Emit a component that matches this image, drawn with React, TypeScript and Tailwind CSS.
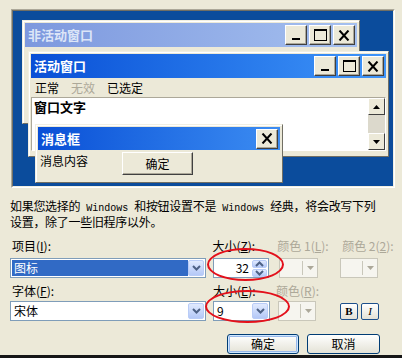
import type { ReactNode } from "react";

type CaptionKind = "min" | "max" | "close";

function CaptionButton({ kind }: { kind: CaptionKind }) {
  return (
    <div className="flex h-[20px] w-[22px] items-center justify-center border border-t-white border-l-white border-r-[#404040] border-b-[#404040] bg-[#ECE9D8] shadow-[inset_-1px_-1px_0_#ACA899]">
      {kind === "min" && (
        <svg width="12" height="12">
          <rect x="2" y="9" width="8" height="2" fill="#000" />
        </svg>
      )}
      {kind === "max" && (
        <svg width="13" height="12">
          <rect x="0.5" y="0.5" width="12" height="11" fill="none" stroke="#000" />
          <rect x="0" y="0" width="13" height="2" fill="#000" />
        </svg>
      )}
      {kind === "close" && (
        <svg width="12" height="11">
          <path d="M1.5 0.5 L10.5 10.5 M10.5 0.5 L1.5 10.5" stroke="#000" strokeWidth="2" />
        </svg>
      )}
    </div>
  );
}

function Chevron({ up = false, color = "#4D6185" }: { up?: boolean; color?: string }) {
  return (
    <svg width="9" height="6">
      <path
        d={up ? "M1 5 L4.5 1.5 L8 5" : "M1 1 L4.5 4.5 L8 1"}
        fill="none"
        stroke={color}
        strokeWidth="2"
      />
    </svg>
  );
}

function DropButton() {
  return (
    <div className="flex w-[16px] items-center justify-center rounded-[2px] border border-[#B9CCF7] bg-gradient-to-b from-[#E1EAFE] to-[#B4C8F7]">
      <Chevron />
    </div>
  );
}

function DisabledCombo({ width }: { width: string }) {
  return (
    <div className={`flex h-[20px] ${width} border border-[#C9C7BA] bg-[#F6F5EF]`}>
      <div className="flex-1" />
      <div className="my-[2px] w-px bg-[#C9C7BA]" />
      <div className="flex w-[14px] items-center justify-center">
        <svg width="7" height="4">
          <path d="M0 0 L7 0 L3.5 4 Z" fill="#ACA899" />
        </svg>
      </div>
    </div>
  );
}

function Label({ children, muted = false, width }: { children: ReactNode; muted?: boolean; width: string }) {
  return (
    <div className={`${width} h-[13px] text-[12px] leading-[13px] ${muted ? "text-[#ACA899]" : "text-black"}`}>
      {children}
    </div>
  );
}

function Win({ children }: { children: ReactNode }) {
  return <span className="font-['Liberation_Mono',monospace] text-[10px] tracking-normal">{children}</span>;
}

export default function App() {
  return (
    <div className="relative flex h-[358px] w-[402px] flex-col overflow-hidden bg-[#ECE9D8] font-['Noto_Sans_CJK_SC',sans-serif] text-[12px] text-black">
      {/* preview */}
      <div className="ml-[11px] mt-[9px] h-[179px] w-[384px] border border-t-[#ACA899] border-l-[#ACA899] border-r-white border-b-white">
        <div className="relative h-full w-full overflow-hidden border border-t-[#716F64] border-l-[#716F64] border-r-[#F1EFE2] border-b-[#F1EFE2] bg-[#0B4C9C]">
          {/* inactive window */}
          <div className="absolute left-[9px] top-[9px] h-[104px] w-[338px] border border-t-[#F1EFE2] border-l-[#F1EFE2] border-r-[#716F64] border-b-[#716F64] bg-[#ECE9D8] p-[2px] shadow-[inset_1px_1px_0_white]">
            <div className="flex h-[24px] items-center justify-between bg-gradient-to-r from-[#7D98DE] to-[#A5C0EF] pl-[3px] pr-[2px]">
              <span className="text-[13px] font-bold leading-[16px] text-[#DCE5F7]">非活动窗口</span>
              <div className="flex gap-[2px]">
                <CaptionButton kind="min" />
                <CaptionButton kind="max" />
                <CaptionButton kind="close" />
              </div>
            </div>
          </div>

          {/* active window */}
          <div className="absolute left-[15px] top-[40px] flex h-[106px] w-[361px] flex-col border border-t-[#F1EFE2] border-l-[#F1EFE2] border-r-[#716F64] border-b-[#716F64] bg-[#ECE9D8] p-[2px] shadow-[inset_1px_1px_0_white]">
            <div className="flex h-[24px] items-center justify-between bg-gradient-to-r from-[#0A4FD6] to-[#3F95F9] pl-[3px] pr-[2px]">
              <span className="text-[13px] font-bold leading-[16px] text-white">活动窗口</span>
              <div className="flex gap-[2px]">
                <CaptionButton kind="min" />
                <CaptionButton kind="max" />
                <CaptionButton kind="close" />
              </div>
            </div>
            <div className="flex h-[19px] items-center gap-[12px] px-[4px] leading-[14px]">
              <span>正常</span>
              <span className="text-[#ACA899]">无效</span>
              <span>已选定</span>
            </div>
            <div className="flex h-[54px] border border-t-[#ACA899] border-l-[#ACA899] border-r-white border-b-white">
              <div className="flex-1 bg-white px-[2px] pt-[1px] text-[13px] font-bold leading-[15px]">窗口文字</div>
              <div className="flex w-[17px] flex-col bg-[#DCD9CC]">
                <div className="flex h-[17px] items-center justify-center border border-t-white border-l-white border-r-[#404040] border-b-[#404040] bg-[#ECE9D8]">
                  <svg width="7" height="4">
                    <path d="M3.5 0 L7 4 L0 4 Z" fill="#000" />
                  </svg>
                </div>
                <div className="flex-1" />
                <div className="flex h-[17px] items-center justify-center border border-t-white border-l-white border-r-[#404040] border-b-[#404040] bg-[#ECE9D8]">
                  <svg width="7" height="4">
                    <path d="M0 0 L7 0 L3.5 4 Z" fill="#000" />
                  </svg>
                </div>
              </div>
            </div>
          </div>

          {/* message box */}
          <div className="absolute left-[22px] top-[113px] flex h-[59px] w-[248px] flex-col border border-t-[#F1EFE2] border-l-[#F1EFE2] border-r-[#716F64] border-b-[#716F64] bg-[#ECE9D8] p-[2px] shadow-[inset_1px_1px_0_white]">
            <div className="flex h-[23px] items-center justify-between bg-gradient-to-r from-[#0A4FD6] to-[#3C8CF2] pl-[3px] pr-[2px]">
              <span className="text-[13px] font-bold leading-[16px] text-white">消息框</span>
              <CaptionButton kind="close" />
            </div>
            <div className="flex items-start pt-[2px]">
              <span className="w-[84px] pl-[2px] pt-[2px] leading-[14px]">消息内容</span>
              <div className="flex h-[23px] w-[71px] items-center justify-center border border-t-white border-l-white border-r-[#404040] border-b-[#404040] bg-[#ECE9D8] shadow-[inset_-1px_-1px_0_#ACA899]">
                确定
              </div>
            </div>
          </div>
        </div>
      </div>

      {/* description */}
      <p className="mt-[11px] pl-[10px] leading-[13px] tracking-[-0.3px]">
        如果您选择的<Win> Windows </Win>和按钮设置不是<Win> Windows </Win>经典，将会改写下列
        <br />
        设置，除了一些旧程序以外。
      </p>

      {/* item row labels */}
      <div className="mt-[11px] flex pl-[12px]">
        <Label width="w-[201px]">
          项目(<span className="underline">I</span>):
        </Label>
        <Label width="w-[65px]">
          大小(<span className="underline">Z</span>):
        </Label>
        <Label width="w-[65px]" muted>
          颜色 1(<span className="underline">L</span>):
        </Label>
        <Label width="w-[60px]" muted>
          颜色 2(<span className="underline">2</span>):
        </Label>
      </div>

      {/* item row controls */}
      <div className="mt-[6px] flex items-center pl-[10px]">
        <div className="flex h-[20px] w-[196px] border border-[#7F9DB9] bg-white p-[1px]">
          <div className="flex-1 bg-[#316AC5] pl-[2px] leading-[16px] text-white">图标</div>
          <DropButton />
        </div>
        <div className="ml-[7px] flex h-[20px] w-[56px] border border-[#7F9DB9] bg-white p-[1px]">
          <div className="flex-1 pr-[3px] text-right leading-[16px]">32</div>
          <div className="flex w-[15px] flex-col gap-[1px]">
            <div className="flex flex-1 items-center justify-center rounded-[2px] border border-[#B9CCF7] bg-gradient-to-b from-[#E1EAFE] to-[#B4C8F7]">
              <Chevron up />
            </div>
            <div className="flex flex-1 items-center justify-center rounded-[2px] border border-[#B9CCF7] bg-gradient-to-b from-[#E1EAFE] to-[#B4C8F7]">
              <Chevron />
            </div>
          </div>
        </div>
        <div className="ml-[10px]">
          <DisabledCombo width="w-[39px]" />
        </div>
        <div className="ml-[22px]">
          <DisabledCombo width="w-[38px]" />
        </div>
      </div>

      {/* font row labels */}
      <div className="mt-[6px] flex pl-[12px]">
        <Label width="w-[201px]">
          字体(<span className="underline">F</span>):
        </Label>
        <Label width="w-[63px]">
          大小(<span className="underline">E</span>):
        </Label>
        <Label width="w-[60px]" muted>
          颜色(<span className="underline">R</span>):
        </Label>
      </div>

      {/* font row controls */}
      <div className="mt-[4px] flex items-center pl-[10px]">
        <div className="flex h-[20px] w-[196px] border border-[#7F9DB9] bg-white p-[1px]">
          <div className="flex-1 pl-[2px] leading-[16px]">宋体</div>
          <DropButton />
        </div>
        <div className="ml-[7px] flex h-[20px] w-[57px] border border-[#7F9DB9] bg-white p-[1px]">
          <div className="flex-1 pl-[2px] leading-[16px]">9</div>
          <DropButton />
        </div>
        <div className="ml-[8px]">
          <DisabledCombo width="w-[38px]" />
        </div>
        <div className="ml-[24px] flex h-[17px] w-[18px] items-center justify-center rounded-[2px] border border-[#1C4F8B] bg-gradient-to-b from-white to-[#E3E1D6] font-['Liberation_Serif',serif] text-[11px] font-bold leading-none">
          B
        </div>
        <div className="ml-[3px] flex h-[17px] w-[18px] items-center justify-center rounded-[2px] border border-[#1C4F8B] bg-gradient-to-b from-white to-[#E3E1D6] font-['Liberation_Serif',serif] text-[11px] italic leading-none">
          I
        </div>
      </div>

      {/* dialog buttons */}
      <div className="mt-[13px] flex gap-[8px] pl-[227px]">
        <div className="flex h-[20px] w-[72px] items-center justify-center rounded-[3px] border border-[#003C74] bg-gradient-to-b from-white to-[#E4E2D6] shadow-[inset_0_0_0_1px_#CEE7FF,inset_0_0_0_2px_#98B8EA]">
          确定
        </div>
        <div className="flex h-[20px] w-[73px] items-center justify-center rounded-[3px] border border-[#003C74] bg-gradient-to-b from-white to-[#E4E2D6]">
          取消
        </div>
      </div>

      <div className="mt-auto h-[3px] bg-[#161616]" />

      {/* red highlight marks */}
      <div className="absolute left-[207px] top-[248px] h-[33px] w-[77px] rounded-[50%] border-[2px] border-[#E3101B]" />
      <div className="absolute left-[205px] top-[290px] h-[33px] w-[85px] rounded-[50%] border-[2px] border-[#E3101B]" />
    </div>
  );
}
